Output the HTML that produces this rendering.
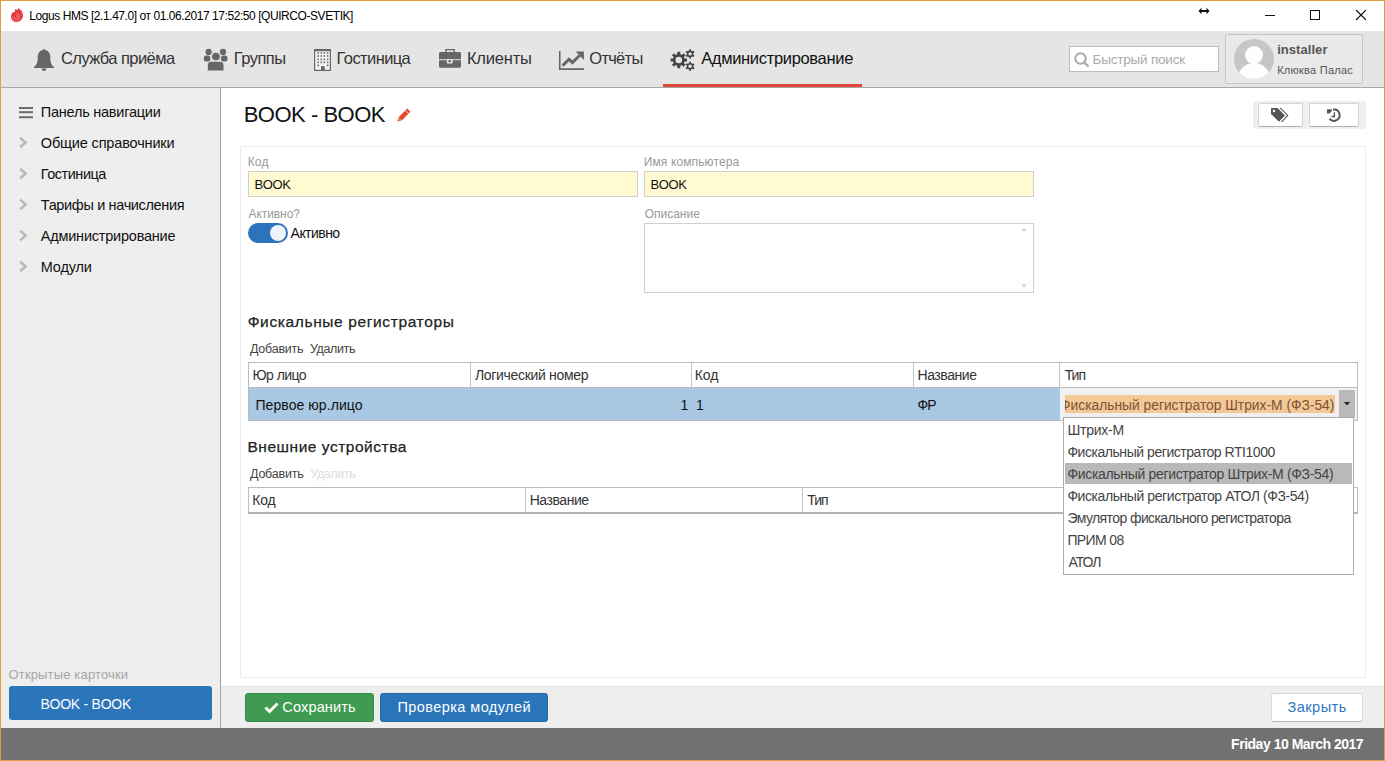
<!DOCTYPE html>
<html><head><meta charset="utf-8">
<style>
*{box-sizing:border-box;margin:0;padding:0}
html,body{width:1385px;height:761px;overflow:hidden;background:#fff;font-family:"Liberation Sans",sans-serif}
.abs{position:absolute}
.t{position:absolute;white-space:nowrap;font-family:"Liberation Sans",sans-serif}
svg{position:absolute;overflow:visible}
</style></head><body>
<!-- title bar -->
<div class="abs" style="left:0;top:0;width:1385px;height:31px;background:#fff"></div>
<svg style="left:10px;top:7px" width="15" height="16" viewBox="0 0 15 16"><path d="M5.1 1.9L7.3 3.3L8.3 1.2C11 2.2 13 5 13 8.2C13 12 10 15 6 15C3 15 1 12.5 1 9.5C1 7 2.6 5.2 5 4.8Z" fill="#e3373a"/><path d="M2.2 9.8A3.6 3.6 0 0 0 9.6 10.2A3.4 3.4 0 0 0 6.2 6.6" fill="none" stroke="#f08c8c" stroke-width="0.8"/><path d="M4.4 9.8A1.7 1.7 0 1 0 6.3 8.3" fill="none" stroke="#f08c8c" stroke-width="0.8"/><path d="M9.5 3.2C11 4.6 11.6 6.5 11.4 8.5" fill="none" stroke="#ee7a7a" stroke-width="0.6"/></svg>
<svg style="left:1198px;top:7px" width="12" height="8" viewBox="0 0 12 8"><path d="M0.5 4L3.5 0.8V7.2Z M11.5 4L8.5 0.8V7.2Z" fill="#111"/><rect x="3" y="3" width="6" height="2" fill="#111"/></svg>
<div class="abs" style="left:1265px;top:15px;width:10px;height:1px;background:#111"></div>
<div class="abs" style="left:1310px;top:10px;width:10px;height:10px;border:1px solid #111"></div>
<svg style="left:1356px;top:10px" width="10" height="10" viewBox="0 0 10 10"><path d="M0 0L10 10M10 0L0 10" stroke="#111" stroke-width="1.1"/></svg>

<!-- nav bar -->
<div class="abs" style="left:0;top:31px;width:1385px;height:56px;background:#e5e5e5"></div>
<div class="abs" style="left:0;top:87px;width:1385px;height:1px;background:#a8a8a8"></div>
<div class="abs" style="left:663px;top:84px;width:199px;height:3px;background:#e2483a"></div>
<!-- bell -->
<svg style="left:34px;top:49px" width="20" height="22" viewBox="0 0 20 22"><path d="M10 0c0.7 0 1 0.5 1 1.1c3.4 0.6 5.3 3.4 5.3 7.4c0 5 1.2 7.6 3.7 9.6v0.9H0v-0.9c2.5-2 3.7-4.6 3.7-9.6c0-4 1.9-6.8 5.3-7.4c0-0.6 0.3-1.1 1-1.1z M7.6 19.6h4.8c0 1.3-1 2.4-2.4 2.4s-2.4-1.1-2.4-2.4z" fill="#666"/></svg>
<!-- group -->
<svg style="left:203px;top:48px" width="25" height="24" viewBox="0 0 25 24"><g fill="#666"><circle cx="5.6" cy="3.9" r="3.1"/><circle cx="20" cy="3.9" r="3.1"/><rect x="0.9" y="7.6" width="6.4" height="6" rx="2.2"/><rect x="18" y="7.6" width="6.4" height="6" rx="2.2"/></g><circle cx="12.9" cy="8.6" r="4.4" fill="#666" stroke="#e5e5e5" stroke-width="1"/><path d="M4.3 23V17.3C4.3 15 6 13.2 8.3 13.2H17C19.3 13.2 21 15 21 17.3V23z" fill="#666" stroke="#e5e5e5" stroke-width="1"/></svg>
<!-- building -->
<svg style="left:314px;top:48px" width="17" height="23" viewBox="0 0 17 23"><rect x="1" y="3" width="15" height="19" fill="#f3f3f3"/><g fill="#666"><rect x="0" y="1" width="17" height="2.2"/><rect x="0" y="1" width="1.2" height="22"/><rect x="15.8" y="1" width="1.2" height="22"/><rect x="0" y="21.8" width="17" height="1.2"/><rect x="7" y="18.2" width="3.7" height="4.8"/></g><g fill="#7a7a7a"><rect x="3.4" y="4.0" width="1.6" height="1.8"/><rect x="6.5" y="4.0" width="1.6" height="1.8"/><rect x="9.5" y="4.0" width="1.6" height="1.8"/><rect x="12.8" y="4.0" width="1.6" height="1.8"/><rect x="3.4" y="7.1" width="1.6" height="1.8"/><rect x="6.5" y="7.1" width="1.6" height="1.8"/><rect x="9.5" y="7.1" width="1.6" height="1.8"/><rect x="12.8" y="7.1" width="1.6" height="1.8"/><rect x="3.4" y="10.5" width="1.6" height="1.8"/><rect x="6.5" y="10.5" width="1.6" height="1.8"/><rect x="9.5" y="10.5" width="1.6" height="1.8"/><rect x="12.8" y="10.5" width="1.6" height="1.8"/><rect x="3.4" y="13.5" width="1.6" height="1.8"/><rect x="6.5" y="13.5" width="1.6" height="1.8"/><rect x="9.5" y="13.5" width="1.6" height="1.8"/><rect x="12.8" y="13.5" width="1.6" height="1.8"/><rect x="3.4" y="16.5" width="1.6" height="1.8"/><rect x="12.8" y="16.5" width="1.6" height="1.8"/></g></svg>
<!-- briefcase -->
<svg style="left:439px;top:49px" width="22" height="19" viewBox="0 0 22 19"><g fill="#666"><path d="M6.3 0H15.9V3H14.6V1.3H7.6V3H6.3z"/><path d="M1.5 3H20.5C21.3 3 22 3.7 22 4.5V10.2H0V4.5C0 3.7 0.7 3 1.5 3z"/><path d="M0 11.2H22V17.3C22 18.1 21.3 18.8 20.5 18.8H1.5C0.7 18.8 0 18.1 0 17.3z"/></g><rect x="7.9" y="10.2" width="5.6" height="4.2" rx="0.6" fill="#f0f0f0"/><rect x="9.4" y="11.2" width="2.6" height="2" fill="#666"/></svg>
<!-- chart -->
<svg style="left:559px;top:51px" width="26" height="19" viewBox="0 0 26 19"><path d="M0.75 0v18.1H25" fill="none" stroke="#666" stroke-width="1.6"/><path d="M3.6 14.6L10 8.2L13.4 11.6L20.5 4.5" fill="none" stroke="#666" stroke-width="2.9" stroke-linejoin="miter"/><path d="M16.6 0.6H24.9V8.9z" fill="#666"/></svg>
<!-- gears -->
<svg style="left:670px;top:49px" width="26" height="23" viewBox="0 0 26 23"><g fill="#444">
<circle cx="8.8" cy="11" r="6"/>
<g transform="translate(8.8 11)"><rect x="-1.5" y="-8.2" width="3" height="16.4"/><rect x="-1.5" y="-8.2" width="3" height="16.4" transform="rotate(45)"/><rect x="-1.5" y="-8.2" width="3" height="16.4" transform="rotate(90)"/><rect x="-1.5" y="-8.2" width="3" height="16.4" transform="rotate(135)"/></g>
<g transform="translate(20.1 4.9)"><circle r="3.3"/><rect x="-0.9" y="-4.6" width="1.8" height="9.2"/><rect x="-0.9" y="-4.6" width="1.8" height="9.2" transform="rotate(60)"/><rect x="-0.9" y="-4.6" width="1.8" height="9.2" transform="rotate(120)"/></g>
<g transform="translate(20.1 17.3)"><circle r="3.3"/><rect x="-0.9" y="-4.6" width="1.8" height="9.2"/><rect x="-0.9" y="-4.6" width="1.8" height="9.2" transform="rotate(60)"/><rect x="-0.9" y="-4.6" width="1.8" height="9.2" transform="rotate(120)"/></g>
</g><circle cx="8.8" cy="11" r="3.3" fill="#e5e5e5"/><circle cx="20.1" cy="4.9" r="1.7" fill="#e5e5e5"/><circle cx="20.1" cy="17.3" r="1.7" fill="#e5e5e5"/></svg>
<!-- search -->
<div class="abs" style="left:1069px;top:46px;width:150px;height:26px;background:#fff;border:1px solid #bcbcbc"></div>
<svg style="left:1074px;top:52px" width="16" height="15" viewBox="0 0 16 15"><circle cx="6.5" cy="6.5" r="5.2" fill="none" stroke="#aaa" stroke-width="2"/><path d="M10.3 10.3l4.2 4.2" stroke="#aaa" stroke-width="2.4"/></svg>
<!-- user box -->
<div class="abs" style="left:1225px;top:34px;width:138px;height:50px;background:#e9e9e9;border:1px solid #c6c6c6;border-radius:2px"></div>
<div class="abs" style="left:1234px;top:39px;width:40px;height:40px;border-radius:50%;overflow:hidden;background:#c6c6c6"><div class="abs" style="left:11px;top:6.6px;width:18px;height:18px;border-radius:50%;background:#fdfdfd"></div><div class="abs" style="left:4px;top:24px;width:32px;height:30px;border-radius:50%;background:#fdfdfd"></div></div>

<!-- sidebar -->
<div class="abs" style="left:0;top:88px;width:220px;height:640px;background:#eeeeee"></div>
<div class="abs" style="left:220px;top:88px;width:1px;height:640px;background:#a4a4a4"></div>
<svg style="left:19px;top:107px" width="14" height="12" viewBox="0 0 14 12"><g fill="#6a6a6a"><rect x="0" y="0" width="14" height="2"/><rect x="0" y="4.2" width="14" height="2"/><rect x="0" y="9.2" width="14" height="2"/></g></svg>
<svg style="left:19px;top:137px" width="9" height="11" viewBox="0 0 9 11"><path d="M1.2 0.8L6.6 5.5L1.2 10.2" fill="none" stroke="#bababa" stroke-width="2.6"/></svg>
<svg style="left:19px;top:168px" width="9" height="11" viewBox="0 0 9 11"><path d="M1.2 0.8L6.6 5.5L1.2 10.2" fill="none" stroke="#bababa" stroke-width="2.6"/></svg>
<svg style="left:19px;top:199px" width="9" height="11" viewBox="0 0 9 11"><path d="M1.2 0.8L6.6 5.5L1.2 10.2" fill="none" stroke="#bababa" stroke-width="2.6"/></svg>
<svg style="left:19px;top:230px" width="9" height="11" viewBox="0 0 9 11"><path d="M1.2 0.8L6.6 5.5L1.2 10.2" fill="none" stroke="#bababa" stroke-width="2.6"/></svg>
<svg style="left:19px;top:261px" width="9" height="11" viewBox="0 0 9 11"><path d="M1.2 0.8L6.6 5.5L1.2 10.2" fill="none" stroke="#bababa" stroke-width="2.6"/></svg>
<div class="abs" style="left:9px;top:686px;width:203px;height:34px;background:#2b75ba;border-radius:3px"></div>

<!-- main content -->
<svg style="left:397px;top:108px" width="14" height="14" viewBox="0 0 14 14"><path d="M10.2 0.6l3.2 3.2l-8.6 8.6l-3.2-3.2z" fill="#e6482e"/><path d="M1.4 9.6l3 3l-4 1z" fill="#e6482e"/><path d="M8.2 2.4l3.4 3.4" stroke="#fff" stroke-width="0.8"/><path d="M1.6 11.4l1 1" stroke="#fff" stroke-width="0.9"/></svg>
<div class="abs" style="left:1253px;top:101px;width:113px;height:28px;background:#efefef;border-radius:3px"></div>
<div class="abs" style="left:1258px;top:103px;width:45px;height:24px;background:#fff;border:1px solid #d4d4d4;border-bottom-color:#b0b0b0;border-radius:2px"></div>
<div class="abs" style="left:1309px;top:103px;width:50px;height:24px;background:#fff;border:1px solid #d4d4d4;border-bottom-color:#b0b0b0;border-radius:2px"></div>
<svg style="left:1271px;top:108px" width="18" height="15" viewBox="0 0 18 15"><path d="M0 0.8C0 0.3 0.3 0 0.8 0H6.5L14 7.5L8 13.8L0 6z" fill="#555"/><circle cx="3" cy="3" r="1.2" fill="#fff"/><path d="M8.5 0H10L17.5 7.5L11.3 14H9.8L16 7.5z" fill="#555"/></svg>
<svg style="left:1326px;top:108px" width="15" height="15" viewBox="0 0 15 15"><path d="M7.03 1.69A5.6 5.6 0 1 1 3.53 10.57" fill="none" stroke="#555" stroke-width="1.9"/><path d="M1 1.2H5.8V3L3.6 5.4H1Z" fill="#555"/><path d="M8.4 4.2V8.5H5.5" fill="none" stroke="#555" stroke-width="1.4"/></svg>

<!-- form panel -->
<div class="abs" style="left:240px;top:146px;width:1126px;height:532px;border:1px solid #ececec"></div>
<div class="abs" style="left:248px;top:171px;width:390px;height:26px;background:#fffad2;border:1px solid #cfcfcf"></div>
<div class="abs" style="left:644px;top:171px;width:390px;height:26px;background:#fffad2;border:1px solid #cfcfcf"></div>
<div class="abs" style="left:644px;top:223px;width:390px;height:70px;background:#fff;border:1px solid #cfcfcf"></div>
<svg style="left:1020px;top:227px" width="8" height="60" viewBox="0 0 8 60"><path d="M1 4L4 1L7 4z M1 57.5L4 60.5L7 57.5z" fill="#cfcfcf"/></svg>
<div class="abs" style="left:248px;top:223px;width:40px;height:20px;background:#2b74bb;border-radius:10px"></div>
<div class="abs" style="left:270px;top:225px;width:16px;height:16px;background:#eef3f9;border-radius:50%"></div>

<!-- table 1 -->
<div class="abs" style="left:248px;top:362px;width:1110px;height:59px;background:#fff;border:1px solid #bdbdbd"></div>
<div class="abs" style="left:249px;top:387px;width:1108px;height:1px;background:#bdbdbd"></div>
<div class="abs" style="left:470px;top:363px;width:1px;height:24px;background:#c4c4c4"></div>
<div class="abs" style="left:691px;top:363px;width:1px;height:24px;background:#c4c4c4"></div>
<div class="abs" style="left:913px;top:363px;width:1px;height:24px;background:#c4c4c4"></div>
<div class="abs" style="left:1059px;top:363px;width:1px;height:24px;background:#c4c4c4"></div>
<div class="abs" style="left:249px;top:388px;width:811px;height:32px;background:#a9c8e3"></div>
<div class="abs" style="left:1060px;top:388px;width:297px;height:32px;background:#f0f0f0"></div>
<div class="abs" style="left:1065px;top:395px;width:270px;height:18px;overflow:hidden;background:#f3c896"><div class="t" style="left:-4.900000000000091px;top:4.0px;font-size:13.8px;line-height:13.8px;color:#7a5434">Фискальный регистратор Штрих-М (ФЗ-54)</div></div>
<div class="abs" style="left:1339px;top:390px;width:16px;height:28px;background:#b9b9b9"></div>
<svg style="left:1343px;top:402px" width="8" height="5" viewBox="0 0 8 5"><path d="M0.8 0H7.2L4 3.4z" fill="#2a2a2a"/></svg>

<!-- table 2 -->
<div class="abs" style="left:248px;top:487px;width:1110px;height:27px;background:#fff;border:1px solid #bdbdbd;border-bottom:2px solid #b4b4b4"></div>
<div class="abs" style="left:525px;top:488px;width:1px;height:24px;background:#c4c4c4"></div>
<div class="abs" style="left:802px;top:488px;width:1px;height:24px;background:#c4c4c4"></div>

<!-- dropdown list -->
<div class="abs" style="left:1063px;top:417px;width:291px;height:158px;background:#fff;border:1px solid #acacac"></div>
<div class="abs" style="left:1065px;top:463px;width:287px;height:21px;background:#b9b9b9"></div>

<!-- footer -->
<div class="abs" style="left:221px;top:686px;width:1163px;height:42px;background:#eeeeee"></div>
<div class="abs" style="left:221px;top:686px;width:1163px;height:1px;background:#e2e2e2"></div>
<div class="abs" style="left:245px;top:693px;width:129px;height:29px;background:#3f9b51;border:1px solid #35894a;border-radius:3px"></div>
<svg style="left:264px;top:702px" width="15" height="12" viewBox="0 0 15 12"><path d="M0.5 6.5L2.5 4.5L5.5 7.5L12.5 0.5L14.5 2.5L5.5 11.5z" fill="#fff"/></svg>
<div class="abs" style="left:380px;top:693px;width:168px;height:29px;background:#2b75ba;border:1px solid #2468a6;border-radius:3px"></div>
<div class="abs" style="left:1271px;top:693px;width:92px;height:29px;background:#fff;border:1px solid #d6d6d6;border-bottom-color:#b8b8b8;border-radius:3px"></div>

<!-- status bar -->
<div class="abs" style="left:0;top:728px;width:1385px;height:33px;background:#717171"></div>

<div class="t" id="title" style="left:29.3px;top:9.8px;font-size:12px;line-height:12px;font-weight:normal;letter-spacing:-0.436px;color:#000">Logus HMS [2.1.47.0] от 01.06.2017 17:52:50 [QUIRCO-SVETIK]</div>
<div class="t" id="n1" style="left:61.0px;top:50.0px;font-size:16.5px;line-height:16.5px;font-weight:normal;letter-spacing:-0.583px;color:#333">Служба приёма</div>
<div class="t" id="n2" style="left:233.7px;top:50.0px;font-size:16.5px;line-height:16.5px;font-weight:normal;letter-spacing:-0.5px;color:#333">Группы</div>
<div class="t" id="n3" style="left:336.6px;top:50.0px;font-size:16.5px;line-height:16.5px;font-weight:normal;letter-spacing:-0.6px;color:#333">Гостиница</div>
<div class="t" id="n4" style="left:466.9px;top:50.0px;font-size:16.5px;line-height:16.5px;font-weight:normal;letter-spacing:-0.2px;color:#333">Клиенты</div>
<div class="t" id="n5" style="left:589.3px;top:50.0px;font-size:16.5px;line-height:16.5px;font-weight:normal;letter-spacing:-0.72px;color:#333">Отчёты</div>
<div class="t" id="n6" style="left:701.2px;top:50.0px;font-size:16.5px;line-height:16.5px;font-weight:normal;letter-spacing:-0.325px;color:#111">Администрирование</div>
<div class="t" id="srch" style="left:1092.6px;top:52.7px;font-size:13.5px;line-height:13.5px;font-weight:normal;letter-spacing:-0.208px;color:#aaa">Быстрый поиск</div>
<div class="t" id="usr" style="left:1277.2px;top:43.0px;font-size:13px;line-height:13px;font-weight:bold;letter-spacing:0.05px;color:#555">installer</div>
<div class="t" id="hotel" style="left:1277.2px;top:64.7px;font-size:11px;line-height:11px;font-weight:normal;letter-spacing:0.255px;color:#555">Клюква Палас</div>
<div class="t" id="s0" style="left:40.8px;top:105.0px;font-size:14.5px;line-height:14.5px;font-weight:normal;letter-spacing:-0.24px;color:#111">Панель навигации</div>
<div class="t" id="s1" style="left:40.8px;top:136.0px;font-size:14.5px;line-height:14.5px;font-weight:normal;letter-spacing:-0.156px;color:#111">Общие справочники</div>
<div class="t" id="s2" style="left:40.8px;top:167.0px;font-size:14.5px;line-height:14.5px;font-weight:normal;letter-spacing:-0.475px;color:#111">Гостиница</div>
<div class="t" id="s3" style="left:40.8px;top:198.0px;font-size:14.5px;line-height:14.5px;font-weight:normal;letter-spacing:-0.35px;color:#111">Тарифы и начисления</div>
<div class="t" id="s4" style="left:40.8px;top:229.0px;font-size:14.5px;line-height:14.5px;font-weight:normal;letter-spacing:-0.219px;color:#111">Администрирование</div>
<div class="t" id="s5" style="left:40.8px;top:260.0px;font-size:14.5px;line-height:14.5px;font-weight:normal;letter-spacing:-0.18px;color:#111">Модули</div>
<div class="t" id="open" style="left:8.5px;top:668.4px;font-size:13px;line-height:13px;font-weight:normal;letter-spacing:0.156px;color:#a6a6a6">Открытые карточки</div>
<div class="t" id="card" style="left:40.5px;top:697.0px;font-size:14px;line-height:14px;font-weight:normal;letter-spacing:-0.26px;color:#fff">BOOK - BOOK</div>
<div class="t" id="h1" style="left:243.7px;top:103.7px;font-size:22px;line-height:22px;font-weight:normal;letter-spacing:-0.49px;color:#111">BOOK - BOOK</div>
<div class="t" id="l1" style="left:247.7px;top:156.0px;font-size:12px;line-height:12px;font-weight:normal;letter-spacing:0.15px;color:#999">Код</div>
<div class="t" id="v1" style="left:254.5px;top:177.5px;font-size:13px;line-height:13px;font-weight:normal;letter-spacing:-0.4px;color:#111">BOOK</div>
<div class="t" id="l2" style="left:643.7px;top:156.0px;font-size:12px;line-height:12px;font-weight:normal;letter-spacing:0.123px;color:#999">Имя компьютера</div>
<div class="t" id="v2" style="left:650.5px;top:177.5px;font-size:13px;line-height:13px;font-weight:normal;letter-spacing:-0.4px;color:#111">BOOK</div>
<div class="t" id="l3" style="left:248.5px;top:207.7px;font-size:12px;line-height:12px;font-weight:normal;letter-spacing:-0.071px;color:#999">Активно?</div>
<div class="t" id="l4" style="left:644.7px;top:207.5px;font-size:12px;line-height:12px;font-weight:normal;letter-spacing:-0.014px;color:#999">Описание</div>
<div class="t" id="act" style="left:290.6px;top:226.0px;font-size:14px;line-height:14px;font-weight:normal;letter-spacing:-0.55px;color:#111">Активно</div>
<div class="t" id="sec1" style="left:247.7px;top:314.2px;font-size:15.5px;line-height:15.5px;font-weight:normal;letter-spacing:0.627px;color:#222;-webkit-text-stroke:0.25px #222">Фискальные регистраторы</div>
<div class="t" id="add1" style="left:250.0px;top:343.0px;font-size:12.5px;line-height:12.5px;font-weight:normal;letter-spacing:-0.243px;color:#444">Добавить</div>
<div class="t" id="del1" style="left:310.0px;top:343.0px;font-size:12.5px;line-height:12.5px;font-weight:normal;letter-spacing:-0.383px;color:#444">Удалить</div>
<div class="t" id="th1" style="left:252.5px;top:367.9px;font-size:14px;line-height:14px;font-weight:normal;letter-spacing:-0.55px;color:#333">Юр лицо</div>
<div class="t" id="th2" style="left:475.0px;top:367.9px;font-size:14px;line-height:14px;font-weight:normal;letter-spacing:-0.32px;color:#333">Логический номер</div>
<div class="t" id="th3" style="left:694.8px;top:367.9px;font-size:14px;line-height:14px;font-weight:normal;letter-spacing:-0.15px;color:#333">Код</div>
<div class="t" id="th4" style="left:917.5px;top:367.9px;font-size:14px;line-height:14px;font-weight:normal;letter-spacing:-0.443px;color:#333">Название</div>
<div class="t" id="th5" style="left:1064.7px;top:367.9px;font-size:14px;line-height:14px;font-weight:normal;letter-spacing:-1.0px;color:#333">Тип</div>
<div class="t" id="r1" style="left:255.5px;top:398.0px;font-size:14px;line-height:14px;font-weight:normal;letter-spacing:0.062px;color:#111">Первое юр.лицо</div>
<div class="t" id="r2" style="left:680.5px;top:398.0px;font-size:14px;line-height:14px;font-weight:normal;letter-spacing:0.0px;color:#111">1</div>
<div class="t" id="r3" style="left:696.0px;top:398.0px;font-size:14px;line-height:14px;font-weight:normal;letter-spacing:0.0px;color:#111">1</div>
<div class="t" id="r4" style="left:917.5px;top:398.0px;font-size:14px;line-height:14px;font-weight:normal;letter-spacing:-1.0px;color:#111">ФР</div>
<div class="t" id="sec2" style="left:247.5px;top:438.7px;font-size:15.5px;line-height:15.5px;font-weight:normal;letter-spacing:0.524px;color:#222;-webkit-text-stroke:0.25px #222">Внешние устройства</div>
<div class="t" id="add2" style="left:250.0px;top:468.0px;font-size:12.5px;line-height:12.5px;font-weight:normal;letter-spacing:-0.229px;color:#444">Добавить</div>
<div class="t" id="del2" style="left:310.3px;top:468.0px;font-size:12.5px;line-height:12.5px;font-weight:normal;letter-spacing:-0.383px;color:#dcdcdc">Удалить</div>
<div class="t" id="t2h1" style="left:252.2px;top:493.0px;font-size:14px;line-height:14px;font-weight:normal;letter-spacing:-0.15px;color:#333">Код</div>
<div class="t" id="t2h2" style="left:529.7px;top:493.0px;font-size:14px;line-height:14px;font-weight:normal;letter-spacing:-0.443px;color:#333">Название</div>
<div class="t" id="t2h3" style="left:807.3px;top:493.0px;font-size:14px;line-height:14px;font-weight:normal;letter-spacing:-1.0px;color:#333">Тип</div>
<div class="t" id="d1" style="left:1067.4px;top:423.0px;font-size:14px;line-height:14px;font-weight:normal;letter-spacing:-0.233px;color:#444">Штрих-М</div>
<div class="t" id="d2" style="left:1067.4px;top:445.0px;font-size:14px;line-height:14px;font-weight:normal;letter-spacing:-0.452px;color:#444">Фискальный регистратор RTI1000</div>
<div class="t" id="d3" style="left:1067.4px;top:466.5px;font-size:14px;line-height:14px;font-weight:normal;letter-spacing:-0.324px;color:#444">Фискальный регистратор Штрих-М (ФЗ-54)</div>
<div class="t" id="d4" style="left:1067.4px;top:488.5px;font-size:14px;line-height:14px;font-weight:normal;letter-spacing:-0.426px;color:#444">Фискальный регистратор АТОЛ (ФЗ-54)</div>
<div class="t" id="d5" style="left:1067.4px;top:510.5px;font-size:14px;line-height:14px;font-weight:normal;letter-spacing:-0.588px;color:#444">Эмулятор фискального регистратора</div>
<div class="t" id="d6" style="left:1067.4px;top:532.5px;font-size:14px;line-height:14px;font-weight:normal;letter-spacing:-0.633px;color:#444">ПРИМ 08</div>
<div class="t" id="d7" style="left:1068.4px;top:554.5px;font-size:14px;line-height:14px;font-weight:normal;letter-spacing:-1.0px;color:#444">АТОЛ</div>
<div class="t" id="save" style="left:282.3px;top:700.0px;font-size:14.5px;line-height:14.5px;font-weight:normal;letter-spacing:0.163px;color:#fff">Сохранить</div>
<div class="t" id="chk" style="left:397.5px;top:700.0px;font-size:14.5px;line-height:14.5px;font-weight:normal;letter-spacing:0.42px;color:#fff">Проверка модулей</div>
<div class="t" id="close" style="left:1287.5px;top:700.0px;font-size:14.5px;line-height:14.5px;font-weight:normal;letter-spacing:0.483px;color:#2b76c0">Закрыть</div>
<div class="t" id="date" style="left:1231.1px;top:736.8px;font-size:14px;line-height:14px;font-weight:bold;letter-spacing:-0.479px;color:#fff">Friday 10 March 2017</div>

<!-- window frame -->
<div class="abs" style="left:0;top:0;width:1385px;height:761px;border:1px solid #e39d3d;z-index:10"></div>
</body></html>
